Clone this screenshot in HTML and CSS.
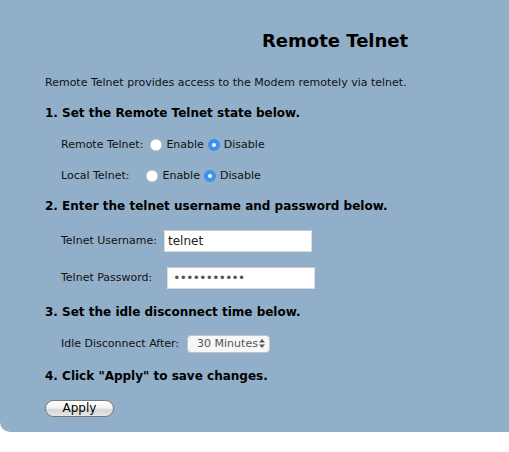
FILE: index.html
```html
<!DOCTYPE html>
<html>
<head>
<meta charset="utf-8">
<link rel="stylesheet" href="styles.css">
</head>
<body>
<div class="panel">
  <h1 class="title">Remote Telnet</h1>
  <p class="desc">Remote Telnet provides access to the Modem remotely via telnet.</p>
  <h2 class="step">1. Set the Remote Telnet state below.</h2>
  <div class="row">
    <span class="label">Remote Telnet:</span>
    <span class="radio"></span><span class="opt">Enable</span>
    <span class="radio on"></span><span class="opt">Disable</span>
  </div>
  <div class="row">
    <span class="label l2">Local Telnet:</span>
    <span class="radio"></span><span class="opt">Enable</span>
    <span class="radio on"></span><span class="opt">Disable</span>
  </div>
  <h2 class="step s2">2. Enter the telnet username and password below.</h2>
  <div class="row tall">
    <span class="label">Telnet Username:</span>
    <span class="input">telnet</span>
  </div>
  <div class="row tall">
    <span class="label l3">Telnet Password:</span>
    <span class="input pw">•••••••••••</span>
  </div>
  <h2 class="step s3">3. Set the idle disconnect time below.</h2>
  <div class="row">
    <span class="label l4">Idle Disconnect After:</span>
    <span class="select">30 Minutes<svg class="arrows" width="6" height="9" viewBox="0 0 6 9"><path d="M3 0 L6 3.5 H0 Z M3 9 L6 5.5 H0 Z" fill="#555"/></svg></span>
  </div>
  <h2 class="step s4">4. Click "Apply" to save changes.</h2>
  <div class="btnrow"><span class="btn">Apply</span></div>
</div>
</body>
</html>
```
FILE: styles.css
```css
html, body { margin: 0; padding: 0; background: #fff; }
body { font-family: "DejaVu Sans", Verdana, sans-serif; color: #000; }
.panel {
  background: #91afc9;
  height: 432px;
  box-sizing: border-box;
  border-bottom-left-radius: 10px;
  padding: 0 0 0 45px;
}
.title {
  margin: 0;
  padding: 30px 0 0 217px;
  font-size: 18px;
  font-weight: bold;
  line-height: 22px;
  height: 22px;
}
.desc {
  margin: 0;
  padding-top: 24px;
  font-size: 11px;
  line-height: 14px;
  color: #111;
}
.step {
  margin: 0;
  font-size: 12px;
  font-weight: bold;
  line-height: 16px;
  padding-top: 15px;
}
.row {
  display: flex;
  align-items: center;
  height: 31px;
  padding-left: 16px;
  font-size: 11px;
  color: #111;
}
.step + .row { margin-top: 8px; }
.label { margin-right: 7px; }
.l2 { margin-right: 17px; }
.l3 { margin-right: 15px; }
.l4 { margin-right: 8px; }
.radio {
  width: 12px; height: 12px; border-radius: 50%;
  background: #fff;
  box-shadow: inset 0 0 0 0.5px #aaa;
  display: inline-flex; align-items: center; justify-content: center;
  margin-right: 4px;
}
.radio.on { background: #3d8ff2; box-shadow: none; }
.radio.on::after { content: ""; width: 4px; height: 4px; border-radius: 50%; background: #fff; }
.opt { margin-right: 4px; }
.s2 { padding-top: 7px; }
.row.tall { height: 37px; }
.step + .row.tall { margin-top: 8px; }
.input {
  width: 148px; height: 22px; box-sizing: border-box;
  background: #fff;
  border: 1px solid #dcdcdc;
  border-top-color: #c8c8c8;
  padding: 0 3px;
  display: flex; align-items: center;
  font-size: 12px;
  color: #222;
}
.input.pw { font-size: 12px; letter-spacing: -0.6px; color: #555; padding-left: 5px; }
.s3 { padding-top: 8px; }
.select {
  width: 83px; height: 18px; box-sizing: border-box;
  background: #f7f7f7;
  border: 1px solid #c4c4c4;
  border-radius: 4px;
  display: flex; align-items: center; justify-content: space-between;
  padding: 0 4px 0 9px;
  font-size: 11px; color: #555;
}
.arrows { display: block; }
.s4 { padding-top: 9px; }
.btnrow { padding-top: 13px; }
.btn {
  display: inline-flex; align-items: center; justify-content: center;
  width: 69px; height: 17px; box-sizing: border-box;
  border-radius: 9px;
  border: 1px solid #777;
  background: linear-gradient(#ffffff 0%, #f4f4f4 45%, #d6d6d6 60%, #e8e8e8 100%);
  font-size: 12px; color: #000;
}
```
